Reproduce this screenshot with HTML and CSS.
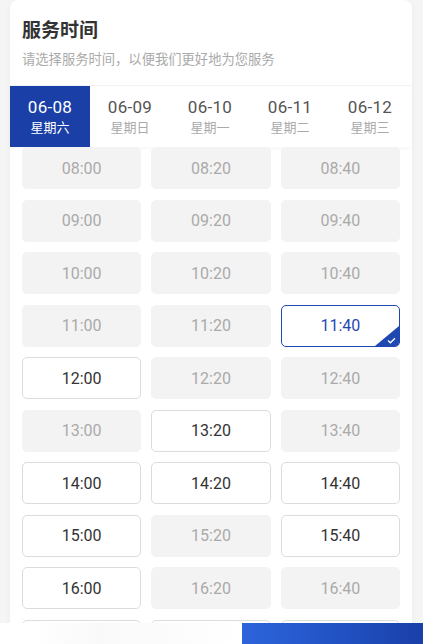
FILE: index.html
```html
<!DOCTYPE html>
<html lang="zh-CN">
<head>
    <meta charset="UTF-8">
    <meta name="viewport" content="width=device-width, initial-scale=1.0">
    <title>服务时间</title>
    <link rel="stylesheet" href="styles.css">
</head>
<body>
    <div class="card">
        <div class="head">
            <h1>服务时间</h1>
            <p>请选择服务时间，以便我们更好地为您服务</p>
        </div>
        <div class="tabs">
            <div class="tab active"><span class="date">06-08</span><span class="week">星期六</span></div>
            <div class="tab"><span class="date">06-09</span><span class="week">星期日</span></div>
            <div class="tab"><span class="date">06-10</span><span class="week">星期一</span></div>
            <div class="tab"><span class="date">06-11</span><span class="week">星期二</span></div>
            <div class="tab"><span class="date">06-12</span><span class="week">星期三</span></div>
        </div>
        <div class="slots">
            <div class="slot off">08:00</div>
            <div class="slot off">08:20</div>
            <div class="slot off">08:40</div>
            <div class="slot off">09:00</div>
            <div class="slot off">09:20</div>
            <div class="slot off">09:40</div>
            <div class="slot off">10:00</div>
            <div class="slot off">10:20</div>
            <div class="slot off">10:40</div>
            <div class="slot off">11:00</div>
            <div class="slot off">11:20</div>
            <div class="slot picked">11:40
                <span class="corner">
                    <svg width="9" height="7" viewBox="0 0 9 7"><path d="M1 3.6 L3.4 5.8 L8 1.2" fill="none" stroke="#fff" stroke-width="1.3"/></svg>
                </span>
            </div>
            <div class="slot">12:00</div>
            <div class="slot off">12:20</div>
            <div class="slot off">12:40</div>
            <div class="slot off">13:00</div>
            <div class="slot">13:20</div>
            <div class="slot off">13:40</div>
            <div class="slot">14:00</div>
            <div class="slot">14:20</div>
            <div class="slot">14:40</div>
            <div class="slot">15:00</div>
            <div class="slot off">15:20</div>
            <div class="slot">15:40</div>
            <div class="slot">16:00</div>
            <div class="slot off">16:20</div>
            <div class="slot off">16:40</div>
            <div class="slot"></div>
            <div class="slot"></div>
            <div class="slot"></div>
        </div>
    </div>
    <div class="footer">
        <div class="info"></div>
        <div class="confirm"></div>
    </div>
</body>
</html>
```

FILE: styles.css
```css
body {
    margin: 0;
    background: #f5f5f5;
    font-family: Roboto, "Noto Sans CJK SC", sans-serif;
    color: #333;
    overflow: hidden;
    height: 644px;
}
.card {
    margin: 0 11px 0 10px;
    background: #fff;
    border-radius: 8px 8px 0 0;
    box-shadow: 0 0 6px rgba(0, 0, 0, 0.04);
}
.head {
    padding: 18px 12px 16px;
    border-bottom: 1px solid #f2f2f2;
}
.head h1 {
    margin: 0;
    font-size: 19px;
    line-height: 26px;
    font-weight: 600;
    color: #333;
}
.head p {
    margin: 7px 0 0;
    font-size: 13.3px;
    line-height: 18px;
    color: #aaa;
}
.tabs {
    display: flex;
    height: 61px;
    box-shadow: 0 2px 3px rgba(0, 0, 0, 0.03);
}
.tab {
    position: relative;
    width: 80px;
    display: flex;
    flex-direction: column;
    align-items: center;
    justify-content: center;
}
.tab .date {
    font-size: 17px;
    line-height: 20px;
    letter-spacing: 0.3px;
    color: #555;
}
.tab .week {
    font-size: 13px;
    line-height: 18px;
    margin-top: 2px;
    color: #aaa;
}
.tab.active {
    background: #1a40a8;
}
.tab.active .date,
.tab.active .week {
    color: #fff;
}
.tab.active::after {
    content: "";
    position: absolute;
    left: 34px;
    bottom: -6px;
    border-left: 6px solid transparent;
    border-right: 6px solid transparent;
    border-top: 6px solid #1a40a8;
}
.slots {
    display: grid;
    grid-template-columns: repeat(3, 1fr);
    column-gap: 10px;
    row-gap: 10.5px;
    padding: 0 12px 30px;
}
.slot {
    position: relative;
    height: 42px;
    box-sizing: border-box;
    border: 1px solid #dcdcdc;
    border-radius: 5px;
    display: flex;
    align-items: center;
    justify-content: center;
    font-size: 16px;
    color: #333;
    overflow: hidden;
}
.slot.off {
    background: #f4f3f3;
    border-color: #f4f3f3;
    color: #aaa;
}
.slot.picked {
    border-color: #1f48b0;
    color: #1f48b0;
}
.corner {
    position: absolute;
    right: 0;
    bottom: 0;
    width: 0;
    height: 0;
    border-left: 24px solid transparent;
    border-bottom: 20px solid #1f48b0;
}
.corner svg {
    position: absolute;
    right: 3px;
    top: 11px;
}
.footer {
    position: fixed;
    left: 0;
    right: 0;
    bottom: 0;
    height: 21px;
    display: flex;
    background: #fff;
}
.info {
    flex: 1;
    background: linear-gradient(90deg, #fff 15%, #f9f9f9 40%, #fff);
}
.confirm {
    width: 181px;
    background: linear-gradient(90deg, #2d64dc, #2050c0 60%, #1a3fa8);
}
```
